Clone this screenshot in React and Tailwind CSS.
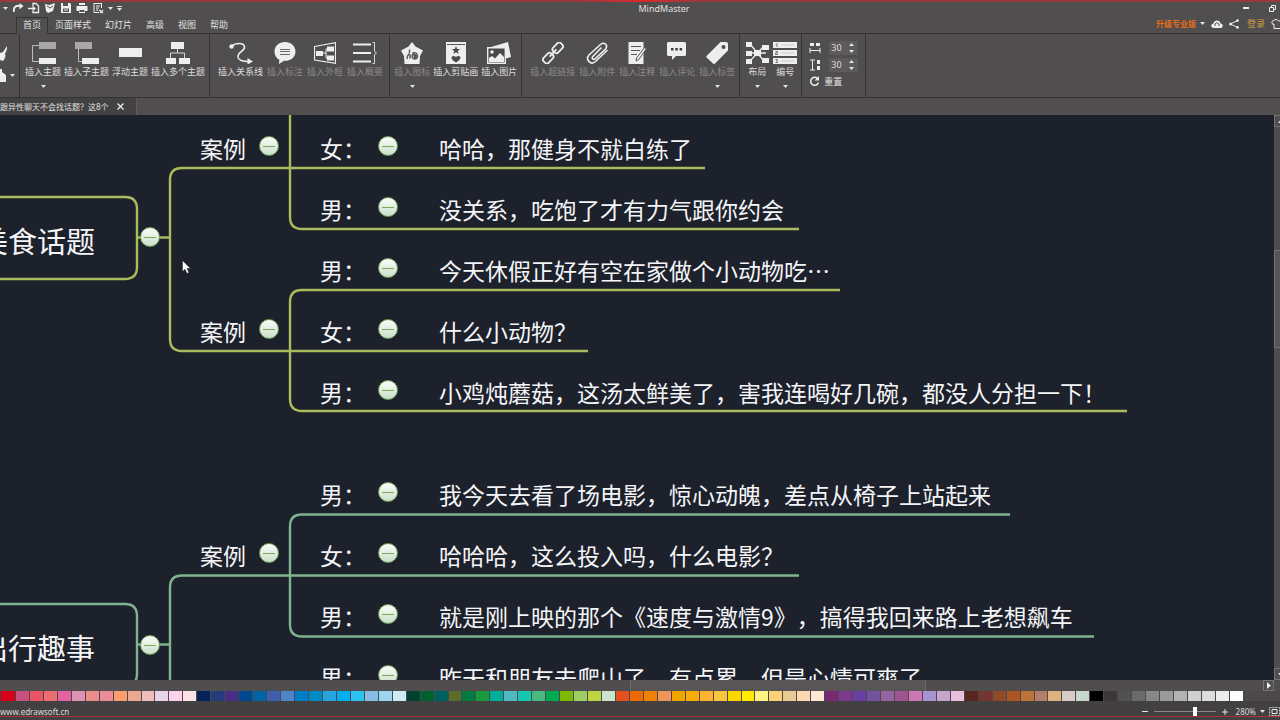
import { Fragment } from "react";

const menuTabs = ["首页", "页面样式", "幻灯片", "高级", "视图", "帮助"];

const swatches = [
  "#d9001b", "#c8507d", "#e85563", "#ea6d6f", "#e562a1", "#db93b5", "#eb8d8a", "#ec8c9b", "#fb9d6d", "#eba892", "#f3bcbc", "#e8d3ea", "#fdd2ea", "#fee0e8",
  "#06215a", "#253c7c", "#4a2e83", "#00488f", "#0066a2", "#3e5fae", "#4f84c6", "#007dc8", "#0089c7", "#27a3dd", "#00aeef", "#2bc3f4", "#87bce6", "#9dd5f0", "#cfeaf8",
  "#00422f", "#00602f", "#00605d", "#586f2b", "#007c40", "#199a3c", "#00ac9a", "#4fb9c4", "#16c6b4", "#4bb97f", "#00ab50", "#7cba00", "#9fcf62", "#bbd63f", "#c8e6cb",
  "#e4501f", "#eb6b00", "#ee8200", "#f0955a", "#f2a500", "#faad00", "#fbb330", "#f6c63c", "#fed600", "#ffea00", "#fdf287", "#ffcf75", "#e8cc97", "#fdd9b2", "#fee7d3",
  "#772a72", "#7b3990", "#663fa0", "#7552a0", "#9663a3", "#9c5590", "#cb78b3", "#a793cf", "#c3a5cd", "#e8c0df",
  "#58261b", "#743530", "#8f4a28", "#ac5422", "#bd7338", "#b08168", "#ddb47c", "#d7cdc6", "#c9d6ce",
  "#000000", "#3d373a", "#525152", "#6b6b6b", "#878787", "#9a9a9a", "#b2b2b2", "#cfcfcf", "#dcdcdc", "#ededed", "#ffffff",
];

/* ---------- ribbon icons ---------- */

const Icon = ({ w = 24, children }) => (
  <svg width={w} height="22" viewBox={`0 0 ${w} 22`} fill="none" aria-hidden="true">
    {children}
  </svg>
);

const TopicIcon = () => (
  <Icon w={25}>
    <path d="M8 3.5H1.5V19.5H8" stroke="#bdbdbd" />
    <path d="M8 0h17v7H8z" fill="#a9a7a8" />
    <path d="M8 16h17v6H8z" fill="#efeeee" />
  </Icon>
);

const SubtopicIcon = () => (
  <Icon w={24}>
    <path d="M3.5 7V19.500H7" stroke="#bdbdbd" />
    <path d="M0 0h17v7H0z" fill="#a9a7a8" />
    <path d="M7 16h17v6H7z" fill="#efeeee" />
  </Icon>
);

const FloatingIcon = () => (
  <Icon w={23}>
    <path d="M0 6h23v9H0z" fill="#efeeee" />
  </Icon>
);

const MultiIcon = () => (
  <Icon>
    <path d="M11.5 6v5M4.500 16v-5h14v5" stroke="#d8d8d8" />
    <path d="M5 0h13v7H5zM0 16h10v6H0zM13 16h11v6H13z" fill="#efeeee" />
  </Icon>
);

const RelationIcon = () => (
  <Icon>
    <circle cx="2.500" cy="4.500" r="2.200" fill="#efeeee" />
    <path d="M3 4C6 1 15 0 15.500 5c.4 4-7 5-6.500 10 .4 4 6 4.500 11 4.500" stroke="#efeeee" strokeWidth="1.600" />
    <path d="M18.500 16l5.500 3.500-5.500 3z" fill="#efeeee" />
  </Icon>
);

const CalloutIcon = () => (
  <Icon w={22}>
    <path d="M11 0C5 0 .5 4 .5 9.500c0 4 2 6.800 4.800 8.300L5 22l5-3.200c7 .4 11.500-3.800 11.500-9.300C21.500 4 17 0 11 0z" fill="#efeeee" />
    <path d="M6 7.500h10M6 9.500h10M6 12.500h10" stroke="#6c6a6b" />
  </Icon>
);

const BoundaryIcon = () => (
  <Icon w={22}>
    <path d="M.5 4.500L21.500.7V21.300L.5 18z" stroke="#efeeee" strokeWidth="1.200" />
    <path d="M8 11h4M14 7h-2v9h2" stroke="#efeeee" />
    <path d="M2 9h7v5H2zM13 4.500h7v5h-7zM13 13.500h7v5h-7z" fill="#efeeee" />
  </Icon>
);

const SummaryIcon = () => (
  <Icon w={25}>
    <path d="M0 2.500h18M0 11h18M0 19.500h18" stroke="#efeeee" strokeWidth="2" />
    <path d="M19.500.5h2v9l2 1.500-2 1.500v9h-2" stroke="#d8d8d8" />
  </Icon>
);

const MarkIcon = () => (
  <Icon w={22}>
    <path d="M11 0l3.500 4.500L22 8.500 19 14l-.5 8h-15L3 14 0 8.500l7.500-4z" fill="#efeeee" />
    <path d="M8.500 7.500v3.500M6.500 17c-1-2 0-3.500 1.500-5 1.500 1 1.500 3 .5 4.500M12 11c2-1 4.500 0 4.500 3 0 2-1.500 3-3 3-2 0-3-2-1.500-6z" stroke="#575556" strokeWidth="1.400" />
    <path d="M12 12c2-1 4 0 4 2s-1.500 2.500-3 2.500z" fill="#575556" />
  </Icon>
);

const ClipartIcon = () => (
  <Icon w={20}>
    <path d="M0 0h20v22H0z" fill="#efeeee" />
    <path d="M1 2.500h18" stroke="#575556" />
    <path d="M10 4l1.200 3h3l-2.400 2 .9 3-2.700-1.800L7.300 12l.9-3-2.400-2h3z" fill="#4b494a" />
    <path d="M10 20.500c-6-3.500-5-6.500-2.500-6.500 1.300 0 2.500 1 2.500 1s1.200-1 2.500-1c2.500 0 3.500 3-2.500 6.500z" fill="#4b494a" />
  </Icon>
);

const PictureIcon = () => (
  <Icon>
    <path d="M4 5L21 0l3 15-5 1.500V5z" fill="#efeeee" />
    <path d="M.7 5.700h17.600v15.600H.7z" fill="#4b494a" stroke="#efeeee" strokeWidth="1.400" />
    <circle cx="5" cy="10" r="1.800" fill="#efeeee" />
    <path d="M2 20v-4l3-2 3 2.500 5-5.500 4 4v5z" fill="#efeeee" />
  </Icon>
);

const LinkIcon = () => (
  <Icon w={22}>
    <g stroke="#efeeee" strokeWidth="1.800" transform="rotate(-47 11 11)">
      <rect x="-1.500" y="7.500" width="11" height="7" rx="2.500" />
      <rect x="12.500" y="7.500" width="11" height="7" rx="2.500" />
      <path d="M6 11h10" />
    </g>
  </Icon>
);

const ClipIcon = () => (
  <Icon w={23}>
    <path d="M15.500 5.500L6.800 14.500c-1.500 1.800.5 3.800 2.300 2.300L19.500 7c3-4-1.500-7.500-5-4.500L3 13c-4 5 2 10.500 6.500 6.500l12-11.500" stroke="#efeeee" strokeWidth="1.600" />
  </Icon>
);

const NoteIcon = () => (
  <Icon w={19}>
    <path d="M.5 0h15v22H.5z" fill="#efeeee" />
    <path d="M3 4.500h10M3 8.500h9M3 12.500h6" stroke="#575556" strokeWidth="1.200" />
    <path d="M16.500 5.500l1.800 1.300-7.500 10.700-2.800 1.500.6-3z" fill="#efeeee" stroke="#575556" />
  </Icon>
);

const CommentIcon = () => (
  <Icon w={20}>
    <path d="M1.500 0h16Q19 0 19 1.500v11q0 1.500-1.500 1.500H9l-4 4v-4H1.500Q0 14 0 12.500v-11Q0 0 1.500 0z" fill="#efeeee" />
    <path d="M4 6h2.500v2.500H4zM8.300 6h2.500v2.500H8.300zM12.600 6h2.500v2.500h-2.500z" fill="#3f3d3e" />
  </Icon>
);

const TagIcon = () => (
  <Icon w={23}>
    <path d="M14.500 0H20q2 0 2 2v6.500L9 21.500q-1 1-2 0L.8 15.800q-1-1 0-2z" fill="#efeeee" />
    <circle cx="17.500" cy="5" r="2" fill="#4b494a" />
  </Icon>
);

const LayoutIcon = () => (
  <Icon w={23}>
    <path d="M4 2l14 17M4 19L18 4M4 11h16" stroke="#efeeee" strokeWidth="1.300" />
    <path d="M0 0h6v5H0zM0 9h6v5H0zM0 17h6v5H0zM8 8h7v6H8zM16 3h7v5h-7zM16 16h7v5h-7z" fill="#efeeee" />
  </Icon>
);

const NumberingIcon = () => (
  <Icon>
    <path d="M0 0h24v6H0zM0 8h24v6H0zM0 16h24v6H0z" fill="#efeeee" />
    <path d="M3 2.500l1-1v3.500M2.500 9.500h2v1.500h-2v1.500h2.500M2.500 17.500h2l-1 1.500 1 .5v1h-2" stroke="#6a6869" strokeWidth=".9" />
    <path d="M8 3h14M8 11h14M8 19h14" stroke="#c4c2c3" strokeWidth=".8" />
  </Icon>
);

const ribbonGroups = [
  {
    className: "gap-[3px] pl-[5px] pr-1",
    items: [
      { label: "插入主题", icon: TopicIcon, menu: true },
      { label: "插入子主题", icon: SubtopicIcon },
      { label: "浮动主题", icon: FloatingIcon },
      { label: "插入多个主题", icon: MultiIcon },
    ],
  },
  {
    className: "gap-1 pl-2 pr-1.5",
    items: [
      { label: "插入关系线", icon: RelationIcon },
      { label: "插入标注", icon: CalloutIcon, dim: true },
      { label: "插入外框", icon: BoundaryIcon, dim: true },
      { label: "插入概要", icon: SummaryIcon, dim: true },
    ],
  },
  {
    className: "gap-[3px] px-1",
    items: [
      { label: "插入图标", icon: MarkIcon, dim: true, menu: true },
      { label: "插入剪贴画", icon: ClipartIcon },
      { label: "插入图片", icon: PictureIcon },
    ],
  },
  {
    className: "gap-1 pl-2 pr-1",
    items: [
      { label: "插入超链接", icon: LinkIcon, dim: true },
      { label: "插入附件", icon: ClipIcon, dim: true },
      { label: "插入注释", icon: NoteIcon, dim: true },
      { label: "插入评论", icon: CommentIcon, dim: true },
      { label: "插入标签", icon: TagIcon, dim: true, menu: true },
    ],
  },
  {
    className: "gap-1 pl-[5px] pr-1",
    items: [
      { label: "布局", icon: LayoutIcon, menu: true },
      { label: "编号", icon: NumberingIcon, menu: true },
    ],
  },
];

const Caret = ({ up }) => (
  <svg width="5" height="3" viewBox="0 0 5 3" className={up ? "rotate-180" : ""} aria-hidden="true">
    <path d="M0 0h5L2.500 3z" fill="#e6e6e6" />
  </svg>
);

const Divider = () => <div className="w-px shrink-0 bg-[#353334]" />;

function RibbonButton({ label, icon: Glyph, dim, menu }) {
  return (
    <button className="flex min-w-6 flex-col items-center whitespace-nowrap pt-2">
      <Glyph />
      <span className={`mt-[3px] leading-[10px] ${dim ? "text-[#8b898a]" : "text-[#dedddd]"}`}>{label}</span>
      {menu && (
        <span className="mt-2">
          <Caret />
        </span>
      )}
    </button>
  );
}

function Spinner({ label, children }) {
  return (
    <div className="flex items-center gap-2">
      <svg width="12" height="12" viewBox="0 0 12 12" fill="none" aria-hidden="true">
        {children}
      </svg>
      <div className="flex h-[14px] items-center bg-[#5c5a5b] pr-1">
        <input aria-label={label} defaultValue="30" className="w-5 bg-transparent pl-0.5 text-[9px] text-[#dcdcdc] outline-none" />
        <div className="flex flex-col gap-1">
          <button aria-label={`${label} +`}>
            <Caret up />
          </button>
          <button aria-label={`${label} -`}>
            <Caret />
          </button>
        </div>
      </div>
    </div>
  );
}

/* ---------- header ---------- */

function QuickBar() {
  return (
    <div className="flex items-center gap-1 pl-[3px]">
      <Caret />
      <button aria-label="重做">
        <svg width="12" height="12" viewBox="0 0 12 12" fill="none">
          <path d="M2 10C1 5 4 3 9 4" stroke="#eee" strokeWidth="1.800" />
          <path d="M7.500 1l4 3-4 3.500z" fill="#eee" />
        </svg>
      </button>
      <button aria-label="新建">
        <svg width="12" height="12" viewBox="0 0 12 12" fill="none">
          <path d="M5 4V1.500h3L10.500 4v6.500H5V9" stroke="#eee" strokeWidth="1.300" />
          <path d="M0 6.500h7M4.500 4.500l2.500 2-2.500 2" stroke="#eee" strokeWidth="1.300" />
        </svg>
      </button>
      <button aria-label="打开">
        <svg width="12" height="12" viewBox="0 0 12 12">
          <path d="M1 2l4 1 6-2-2 8-5 2-2-2z" fill="#eee" />
          <path d="M3 4l3 2 3-2" stroke="#555" fill="none" />
        </svg>
      </button>
      <button aria-label="保存">
        <svg width="12" height="12" viewBox="0 0 12 12">
          <path d="M1 1h9l1 1v9H1z" fill="#eee" />
          <path d="M3 1h5v3H3zM3 6.500h6V10H3z" fill="#555" />
          <path d="M4 8h4" stroke="#eee" />
        </svg>
      </button>
      <button aria-label="打印">
        <svg width="12" height="12" viewBox="0 0 12 12">
          <path d="M3 1h6v2H3zM.5 4h11v5H9v2H3V9H.5z" fill="#eee" />
          <path d="M3.500 8h5v2h-5z" fill="#555" />
        </svg>
      </button>
      <button aria-label="导出">
        <svg width="12" height="12" viewBox="0 0 12 12" fill="none">
          <path d="M2 1.500h8M2 1v9.500h5M9.500 1v5M4 4h4M4 6h3M4 8h2" stroke="#eee" />
          <path d="M7 8l4 3M11 8l-3 3" stroke="#eee" strokeWidth="1.200" />
        </svg>
      </button>
      <Caret />
      <button aria-label="自定义" className="border-t border-[#e6e6e6] pt-px">
        <Caret />
      </button>
    </div>
  );
}

function TitleBar() {
  return (
    <div className="grid h-[7px] grid-cols-[1fr_auto_1fr] items-center">
      <QuickBar />
      <h1 className="pl-12 leading-[7px] text-[#e0e0e0]">MindMaster</h1>
      <div className="flex items-center justify-end gap-5 pr-1">
        <button aria-label="最小化" className="h-0.5 w-1.5 bg-[#eee]" />
        <button aria-label="还原">
          <svg width="7" height="7" viewBox="0 0 7 7" fill="none">
            <path d="M2.500 2V.5h4v4H5" stroke="#eee" />
            <path d="M.5 2.500h4v4h-4z" stroke="#eee" />
          </svg>
        </button>
      </div>
    </div>
  );
}

function MenuBar() {
  return (
    <div className="mt-[7px] flex items-end justify-between border-b border-[#353334] pl-4">
      <nav className="-mb-px flex">
        {menuTabs.map((tab, i) => (
          <button
            key={tab}
            className={`h-[17px] border px-1.5 pb-0.5 leading-[13px] text-[#e4e3e3] ${
              i === 0 ? "border-[#353334] border-b-[#504e4f]" : "border-transparent"
            }`}
          >
            {tab}
          </button>
        ))}
      </nav>
      <div className="flex h-[17px] items-center pb-0.5">
        <button className="flex items-center gap-1 text-[8px] font-bold text-[#e56b1a]">
          升级专业版
          <Caret />
        </button>
        <button aria-label="云" className="ml-1.5">
          <svg width="12" height="10" viewBox="0 0 12 10">
            <path d="M3 9C-.8 9-.5 4.500 2.500 4.500 3 .5 9 .5 9.500 4.500c3 0 3 4.500 0 4.500z" fill="#eee" />
            <path d="M4 7V5l2-1.500L8 5v2" stroke="#4e4c4d" fill="none" />
          </svg>
        </button>
        <button aria-label="分享" className="ml-1.5">
          <svg width="10" height="10" viewBox="0 0 10 10" fill="#eee">
            <path d="M8.500 1.500L1.500 5l7 3.500" stroke="#eee" fill="none" />
            <circle cx="8.500" cy="1.600" r="1.300" />
            <circle cx="1.600" cy="5" r="1.500" />
            <circle cx="8.500" cy="8.400" r="1.300" />
          </svg>
        </button>
        <a href="#login" className="ml-2 text-[#cfa03f]">
          登录
        </a>
        <button aria-label="皮肤" className="ml-1.5">
          <svg width="9" height="10" viewBox="0 0 9 10" fill="none">
            <path d="M9 2C7.500 2 6.500 1.500 6 .7H3.500L.6 3 1.800 5.500 3 5v4.500h6" stroke="#eee" />
          </svg>
        </button>
      </div>
    </div>
  );
}

function Ribbon() {
  return (
    <div className="flex h-16 items-stretch border-b border-[#353334]">
      <div className="flex w-[19px] flex-col justify-center gap-2 pb-1">
        <svg width="7" height="15" viewBox="0 0 7 15" fill="#eee" aria-hidden="true">
          <path d="M7 0L3 6 0 7v7l3 1c2-2 3-5 2-7l2-5z" />
        </svg>
        <div className="flex items-center gap-1">
          <svg width="6" height="13" viewBox="0 0 6 13" fill="#eee" aria-hidden="true">
            <path d="M0 0h2v3l4 3v7H0z" />
          </svg>
          <Caret />
        </div>
      </div>
      <Divider />
      {ribbonGroups.map((group) => (
        <Fragment key={group.items[0].label}>
          <div className={`flex items-start ${group.className}`}>
            {group.items.map((item) => (
              <RibbonButton key={item.label} {...item} />
            ))}
          </div>
          <Divider />
        </Fragment>
      ))}
      <div className="flex flex-col gap-[3px] px-[7px] pt-[7px]">
        <Spinner label="水平间距">
          <path d="M1 1h4v3H1zM7 1h4v3H7z" fill="#eee" />
          <path d="M1 6v5M11 6v5M1 8.500h10" stroke="#eee" />
        </Spinner>
        <Spinner label="垂直间距">
          <path d="M1 1h5M1 11h5M3.500 1v10" stroke="#eee" />
          <path d="M8 1h3v4H8zM8 7h3v4H8z" fill="#eee" />
        </Spinner>
        <button className="flex items-center gap-1 text-[#e4e3e3]">
          <svg width="11" height="11" viewBox="0 0 11 11" fill="none">
            <path d="M8.500 2.500a4 4 0 1 0 1 4" stroke="#eee" strokeWidth="1.500" />
            <path d="M10 0v4.500H5.500z" fill="#eee" />
          </svg>
          重置
        </button>
      </div>
      <Divider />
    </div>
  );
}

function DocumentTabs() {
  return (
    <div className="flex h-[17px]">
      <div className="flex w-[137px] items-center justify-between border-r border-[#5e5c5d] bg-[#434142] pr-3 text-[8px] text-[#e0e0e0]">
        跟异性聊天不会找话题？这8个
        <button aria-label="关闭">
          <svg width="7" height="7" viewBox="0 0 7 7">
            <path d="M.5.5l6 6M6.500.5l-6 6" stroke="#eee" strokeWidth="1.300" />
          </svg>
        </button>
      </div>
    </div>
  );
}

/* ---------- mind map ---------- */

const nodes = [
  { label: "女：", text: "哈哈，那健身不就白练了", y: 31 },
  { label: "男：", text: "没关系，吃饱了才有力气跟你约会", y: 92 },
  { label: "男：", text: "今天休假正好有空在家做个小动物吃…", y: 153 },
  { label: "女：", text: "什么小动物？", y: 214 },
  { label: "男：", text: "小鸡炖蘑菇，这汤太鲜美了，害我连喝好几碗，都没人分担一下！", y: 275 },
  { label: "男：", text: "我今天去看了场电影，惊心动魄，差点从椅子上站起来", y: 377 },
  { label: "女：", text: "哈哈哈，这么投入吗，什么电影？", y: 438 },
  { label: "男：", text: "就是刚上映的那个《速度与激情9》，搞得我回来路上老想飙车", y: 499 },
  { label: "男：", text: "昨天和朋友去爬山了，有点累，但是心情可爽了", y: 560 },
];

const cases = [31, 214, 438];

function Toggle({ x, y }) {
  return (
    <button
      aria-label="折叠"
      className="absolute flex size-5 -translate-x-1/2 -translate-y-1/2 items-center justify-center rounded-full border border-[#6d9c56] bg-linear-to-b from-[#fbfdf9] to-[#c9e0cb]"
      style={{ left: x, top: y }}
    >
      <span className="h-px w-3 bg-[#7fa65c]" />
    </button>
  );
}

function Label({ x, y, large, children }) {
  return (
    <span
      className={`absolute -translate-y-1/2 whitespace-nowrap text-[#f4f5f7] ${
        large ? "text-[29px] leading-10" : "text-[23px] leading-8"
      }`}
      style={{ left: x, top: y }}
    >
      {children}
    </span>
  );
}

function MindMap() {
  return (
    <main className="relative flex-1 overflow-hidden bg-[#1d212c] font-['Noto_Sans_CJK_SC',sans-serif] [text-spacing-trim:space-all]">
      <svg className="absolute inset-0 size-full" fill="none" strokeWidth="2.400" aria-hidden="true">
        <g stroke="#a9bd5c">
          <path d="M-10 82H125q12 0 12 12v58q0 12-12 12H-10" />
          <path d="M137 122.500h33" />
          <path d="M705 53H182q-12 0-12 12v159q0 12 12 12h406" />
          <path d="M290-5V102q0 12 12 12h497" />
          <path d="M840 175H302q-12 0-12 12v97q0 12 12 12h825" />
        </g>
        <g stroke="#7fb48e">
          <path d="M-10 489H125q12 0 12 12v58q0 12-12 12H-10" />
          <path d="M137 529.500h33" />
          <path d="M799 460.500H182q-12 0-12 12v120" />
          <path d="M1010 399.500H302q-12 0-12 12v98q0 12 12 12h792" />
        </g>
      </svg>

      <Label x={-21} y={125} large>美食话题</Label>
      <Toggle x={150} y={122} />
      <Label x={-21} y={532} large>出行趣事</Label>
      <Toggle x={150} y={530} />

      {cases.map((y) => (
        <Fragment key={y}>
          <Label x={200} y={y + 2}>案例</Label>
          <Toggle x={269} y={y} />
        </Fragment>
      ))}
      {nodes.map(({ label, text, y }) => (
        <Fragment key={y}>
          <Label x={320} y={y + 2}>{label}</Label>
          <Toggle x={388} y={y} />
          <Label x={439} y={y + 2}>{text}</Label>
        </Fragment>
      ))}

      {/* pointer */}
      <svg className="absolute left-[182px] top-[145px]" width="9" height="14" viewBox="0 0 9 14" aria-hidden="true">
        <path d="M.5.5v11L3 9.300 5 13.500l2-1-2-4h3.500z" fill="#fff" stroke="#1e212d" strokeWidth=".5" />
      </svg>
    </main>
  );
}

function VerticalScroll() {
  return (
    <div className="flex w-1.5 flex-col justify-between overflow-hidden bg-[#4f4d4e]">
      <button aria-label="向上" className="flex h-3 w-3 items-center justify-center border border-[#757374]">
        <Caret up />
      </button>
      <div className="flex flex-1 flex-col">
        <div className="flex-[123]" />
        <div className="w-3 flex-[97] border border-[#757374] bg-[#575556]" />
        <div className="flex-[321]" />
      </div>
      <button aria-label="向下" className="flex h-3 w-3 items-center justify-center border border-[#757374]">
        <Caret />
      </button>
    </div>
  );
}

function HorizontalScroll() {
  return (
    <div className="flex h-[11px] items-stretch bg-[#4f4d4e] pr-1.5">
      <div className="flex-[631]" />
      <div className="flex-[294] border-x border-[#6a6869] bg-[#575556]" />
      <div className="flex-[338]" />
      <button aria-label="向右" className="flex w-[11px] items-center justify-center border border-[#757374]">
        <svg width="4" height="7" viewBox="0 0 4 7">
          <path d="M0 0l4 3.500L0 7z" fill="#eee" />
        </svg>
      </button>
    </div>
  );
}

/* ---------- footer ---------- */

function Palette() {
  return (
    <div className="flex h-2.5 bg-[#4b494a] pr-9">
      <span className="w-0.5 shrink-0 bg-[#a31a20]" />
      {swatches.map((color) => (
        <button
          key={color}
          aria-label={color}
          className="flex-1 border-r border-[#4b494a]"
          style={{ backgroundColor: color }}
        />
      ))}
    </div>
  );
}

function StatusBar() {
  return (
    <footer className="bg-[#424041] pb-[3px]">
      <div className="flex h-4 items-center justify-between border-b border-[#a5353a] pt-[6px] text-[8px] leading-[9px] text-[#dcdcdc]">
        <a href="#site">www.edrawsoft.cn</a>
        <div className="flex items-center">
          <button aria-label="缩小" className="h-px w-1.5 bg-[#e6e6e6]" />
          <input
            type="range"
            aria-label="缩放"
            defaultValue="68"
            className="mx-1.5 h-[9px] w-[62px] appearance-none bg-transparent [&::-webkit-slider-runnable-track]:h-px [&::-webkit-slider-runnable-track]:bg-[#8a8889] [&::-webkit-slider-thumb]:-mt-1 [&::-webkit-slider-thumb]:h-[9px] [&::-webkit-slider-thumb]:w-1 [&::-webkit-slider-thumb]:appearance-none [&::-webkit-slider-thumb]:bg-white"
          />
          <button aria-label="放大">
            <svg width="6" height="6" viewBox="0 0 6 6">
              <path d="M3 0v6M0 3h6" stroke="#e6e6e6" />
            </svg>
          </button>
          <button className="ml-2 flex items-center gap-1">
            280%
            <Caret />
          </button>
          <button aria-label="适应窗口" className="ml-1">
            <svg width="11" height="9" viewBox="0 0 11 9" fill="none">
              <path d="M.5.500h10v8H.5z" stroke="#ccc" strokeDasharray="2 1" />
              <path d="M3 2.500h5v4H3z" stroke="#eee" />
            </svg>
          </button>
        </div>
      </div>
    </footer>
  );
}

export default function App() {
  return (
    <div className="flex h-screen flex-col overflow-hidden bg-[#504e4f] font-['Noto_Sans','Noto_Sans_CJK_SC',sans-serif] text-[9px]">
      <header>
        <div className="h-0.5 bg-linear-to-r from-[#96383c] from-45% via-[#d8262a] via-50% to-[#96383c] to-55%" />
        <TitleBar />
        <MenuBar />
        <Ribbon />
        <DocumentTabs />
      </header>
      <div className="flex min-h-0 flex-1">
        <MindMap />
        <VerticalScroll />
      </div>
      <HorizontalScroll />
      <Palette />
      <StatusBar />
    </div>
  );
}
